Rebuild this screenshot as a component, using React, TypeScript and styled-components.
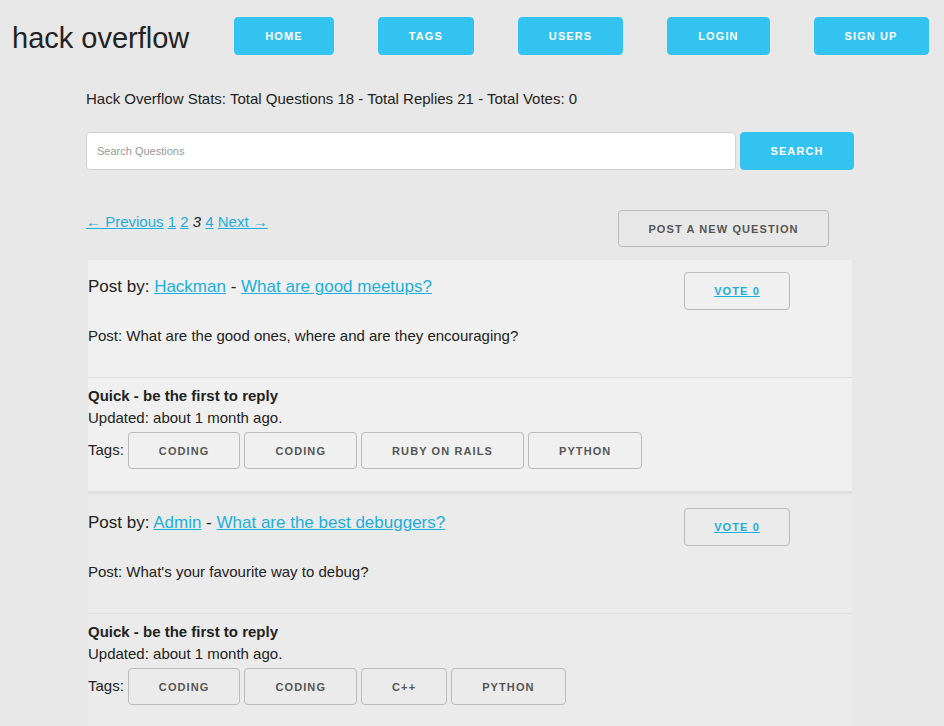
import * as React from 'react';
import styled, { createGlobalStyle, css } from 'styled-components';

const blue = '#33C3F0';
const linkBlue = '#1EAEDB';

interface IPost {
    author: string;
    title: string;
    body: string;
    tags: string[];
}

const posts: IPost[] = [
    {
        author: 'Hackman',
        title: 'What are good meetups?',
        body: 'What are the good ones, where and are they encouraging?',
        tags: ['coding', 'coding', 'ruby on rails', 'python'],
    },
    {
        author: 'Admin',
        title: 'What are the best debuggers?',
        body: "What's your favourite way to debug?",
        tags: ['coding', 'coding', 'c++', 'python'],
    },
];

const navItems = ['Home', 'Tags', 'Users', 'Login', 'Sign up'];

const PostCard = ({ post, highlighted }: { post: IPost; highlighted?: boolean }) => (
    <Card highlighted={highlighted}>
        <CardTop>
            <div>
                <PostTitle>
                    Post by: <Link href="#">{post.author}</Link> - <Link href="#">{post.title}</Link>
                </PostTitle>
                <PostBody>Post: {post.body}</PostBody>
            </div>
            <OutlineButton>
                <VoteLink href="#">Vote 0</VoteLink>
            </OutlineButton>
        </CardTop>
        <Divider />
        <CardBottom>
            <Strong>Quick - be the first to reply</Strong>
            <Line>Updated: about 1 month ago.</Line>
            <TagRow>
                <span>Tags:</span>
                {post.tags.map((t, i) => (
                    <OutlineButton key={i}>{t}</OutlineButton>
                ))}
            </TagRow>
        </CardBottom>
    </Card>
);

export default function App() {
    return (
        <>
            <GlobalStyle />
            <Header>
                <Logo>hack overflow</Logo>
                <Nav>
                    {navItems.map(n => (
                        <PrimaryButton key={n}>{n}</PrimaryButton>
                    ))}
                </Nav>
            </Header>
            <Main>
                <Stats>Hack Overflow Stats: Total Questions 18 - Total Replies 21 - Total Votes: 0</Stats>
                <SearchRow>
                    <SearchInput placeholder="Search Questions" />
                    <PrimaryButton wide>Search</PrimaryButton>
                </SearchRow>
                <PagerRow>
                    <Pager>
                        <Link href="#">← Previous</Link> <Link href="#">1</Link> <Link href="#">2</Link>{' '}
                        <em>3</em> <Link href="#">4</Link> <Link href="#">Next →</Link>
                    </Pager>
                    <OutlineButton>Post a new question</OutlineButton>
                </PagerRow>
                {posts.map((p, i) => (
                    <PostCard key={i} post={p} highlighted={i === 0} />
                ))}
            </Main>
        </>
    );
}

const GlobalStyle = createGlobalStyle`
    html, body {
        margin: 0;
        background: #e8e8e8;
        font-family: "Liberation Sans", Arial, sans-serif;
        font-size: 15px;
        line-height: 24px;
        color: #222;
    }
`;

const Header = styled('header')`
    display: flex;
    align-items: flex-start;
    gap: 45px;
    padding: 17px 0 0 12px;
`;

const Logo = styled('h1')`
    margin: 0;
    padding-top: 4px;
    font-size: 29px;
    font-weight: 400;
    line-height: 34px;
    color: #222;
`;

const Nav = styled('nav')`
    display: flex;
    gap: 44px;
`;

const buttonBase = css`
    display: inline-flex;
    align-items: center;
    justify-content: center;
    box-sizing: border-box;
    height: 38px;
    padding: 0 30px;
    border-radius: 4px;
    font-family: "Liberation Sans", Arial, sans-serif;
    font-size: 11px;
    font-weight: 700;
    letter-spacing: 1.1px;
    text-transform: uppercase;
    white-space: nowrap;
    cursor: pointer;
`;

const PrimaryButton = styled('button')<{ wide?: boolean }>`
    ${buttonBase}
    border: 1px solid ${blue};
    background: ${blue};
    color: white;
    ${p => p.wide && css`
        width: 114px;
        margin-top: -1px;
    `}
`;

const OutlineButton = styled('button')`
    ${buttonBase}
    height: 37px;
    border: 1px solid #bbb;
    background: transparent;
    color: #555;
`;

const Main = styled('main')`
    width: 768px;
    margin-left: 86px;
`;

const Stats = styled('div')`
    margin-top: 32px;
`;

const SearchRow = styled('div')`
    display: flex;
    align-items: center;
    gap: 4px;
    margin-top: 21px;
`;

const SearchInput = styled('input')`
    flex: 1;
    box-sizing: border-box;
    height: 38px;
    padding: 6px 10px;
    border: 1px solid #d1d1d1;
    border-radius: 4px;
    background: #fff;
    font-family: "Liberation Sans", Arial, sans-serif;
    font-size: 11px;
    &::placeholder {
        color: #999;
    }
`;

const PagerRow = styled('div')`
    display: flex;
    justify-content: space-between;
    align-items: flex-start;
    margin-top: 40px;
    padding-right: 25px;

    ${OutlineButton} {
        width: 211px;
    }
`;

const Pager = styled('div')`
    em {
        color: #222;
    }
`;

const Link = styled('a')`
    color: ${linkBlue};
    text-decoration: underline;
`;

const Card = styled('section')<{ highlighted?: boolean }>`
    margin: 13px 2px 2px;
    padding: 12px 0 22px;
    background: ${p => (p.highlighted ? '#f0f0f0' : '#ebebeb')};
    border-bottom: 3px solid #e0e0e0;

    & + & {
        margin-top: 0;
    }
`;

const CardTop = styled('div')`
    display: flex;
    justify-content: space-between;
    align-items: flex-start;
    padding-right: 62px;
    padding-bottom: 29px;

    ${OutlineButton} {
        width: 106px;
        height: 38px;
    }
`;

const PostTitle = styled('div')`
    font-size: 17px;
    line-height: 29px;
`;

const PostBody = styled('div')`
    margin-top: 23px;
`;

const VoteLink = styled('a')`
    color: ${linkBlue};
    text-decoration: underline;
`;

const Divider = styled('hr')`
    margin: 0;
    border: 0;
    border-top: 1px solid #e0e0e0;
`;

const CardBottom = styled('div')`
    padding-top: 7px;
    line-height: 22px;
`;

const Strong = styled('div')`
    font-weight: 700;
`;

const Line = styled('div')``;

const TagRow = styled('div')`
    display: flex;
    align-items: center;
    gap: 4px;
    margin-top: 3px;

    span {
        margin-top: -2px;
    }
`;
